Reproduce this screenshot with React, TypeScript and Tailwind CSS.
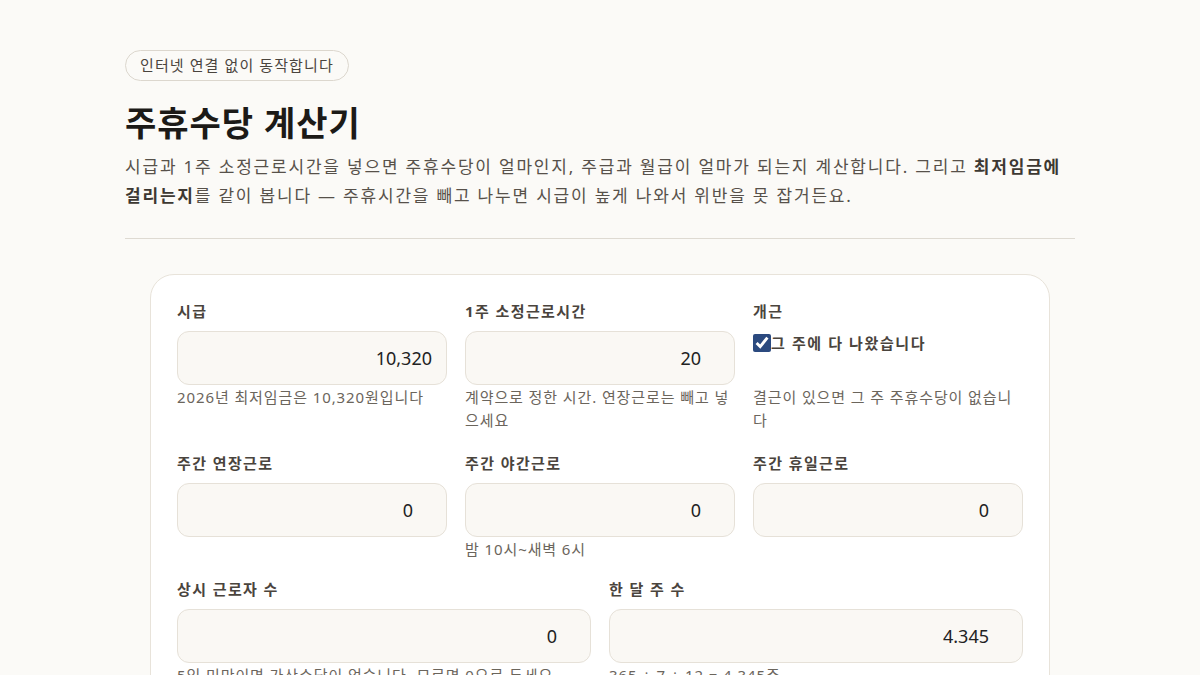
const font = {
  fontFamily: '"Noto Sans", "Noto Sans CJK KR", sans-serif',
};

function NumField({
  label,
  value,
  hint,
  type = "number",
}: {
  label: string;
  value: string;
  hint?: string;
  type?: string;
}) {
  return (
    <div className="flex flex-col">
      <label className="mb-[10px] text-[15px] font-bold leading-[20px] tracking-[1.4px] text-[#4a443d]">
        {label}
      </label>
      <input
        type={type}
        defaultValue={value}
        className={
          type === "number"
            ? "h-[54px] w-full rounded-xl border border-[#e6e1d8] bg-[#faf8f4] pl-[14px] pr-[18px] text-right text-[18px] text-[#222] outline-none"
            : "h-[54px] w-full rounded-xl border border-[#e6e1d8] bg-[#faf8f4] px-[14px] text-right text-[18px] text-[#222] outline-none"
        }
      />
      {hint && (
        <p className="mt-[1px] text-[15px] leading-[23px] tracking-[0.9px] text-[#6b655c]">
          {hint}
        </p>
      )}
    </div>
  );
}

export default function App() {
  return (
    <div className="min-h-[675px] bg-[#fbfaf7]" style={font}>
      <div className="mx-auto w-[950px] pt-[50px] pb-10">
        {/* Header */}
        <span className="inline-block rounded-full border border-[#dcd7ce] px-[14px] py-[3px] text-[15px] leading-[23px] tracking-[1.1px] text-[#4a443d]">
          인터넷 연결 없이 동작합니다
        </span>
        <h1 className="mt-[19px] text-[34px] font-bold leading-[46px] tracking-[1px] text-[#1c1a17]">
          주휴수당 계산기
        </h1>
        <p className="mt-[6px] text-[17px] leading-[29px] tracking-[1.8px] text-[#57514a]">
          시급과 1주 소정근로시간을 넣으면 주휴수당이 얼마인지, 주급과 월급이
          얼마가 되는지 계산합니다. 그리고{" "}
          <strong className="font-bold text-[#3d3832]">최저임금에 걸리는지</strong>를
          같이 봅니다 — 주휴시간을 빼고 나누면 시급이 높게 나와서 위반을 못
          잡거든요.
        </p>
        <hr className="mt-[28px] border-t border-[#dedad2]" />

        {/* Calculator card */}
        <div className="mx-auto mt-[35px] w-[900px] rounded-3xl border border-[#e8e3da] bg-white p-[26px]">
          <div className="grid grid-cols-3 gap-x-[18px] gap-y-[21px]">
            <NumField
              label="시급"
              value="10,320"
              type="text"
              hint="2026년 최저임금은 10,320원입니다"
            />
            <NumField
              label="1주 소정근로시간"
              value="20"
              hint="계약으로 정한 시간. 연장근로는 빼고 넣으세요"
            />
            <div className="flex flex-col">
              <span className="mb-[10px] text-[15px] font-bold leading-[20px] tracking-[1.4px] text-[#4a443d]">
                개근
              </span>
              <label className="flex h-[54px] items-start pt-[2px]">
                <input
                  type="checkbox"
                  defaultChecked
                  className="m-0 mt-[1px] h-[18px] w-[18px] accent-[#2b4a7f]"
                />
                <span className="text-[15px] font-bold leading-[20px] tracking-[1.6px] text-[#4a443d]">
                  그 주에 다 나왔습니다
                </span>
              </label>
              <p className="mt-[1px] text-[15px] leading-[23px] tracking-[0.9px] text-[#6b655c]">
                결근이 있으면 그 주 주휴수당이 없습니다
              </p>
            </div>

            <NumField label="주간 연장근로" value="0" />
            <NumField label="주간 야간근로" value="0" hint="밤 10시~새벽 6시" />
            <NumField label="주간 휴일근로" value="0" />
          </div>

          <div className="mt-[18px] grid grid-cols-2 gap-x-[18px]">
            <NumField
              label="상시 근로자 수"
              value="0"
              hint="5인 미만이면 가산수당이 없습니다. 모르면 0으로 두세요."
            />
            <NumField
              label="한 달 주 수"
              value="4.345"
              hint="365 ÷ 7 ÷ 12 = 4.345주"
            />
          </div>
        </div>
      </div>
    </div>
  );
}
